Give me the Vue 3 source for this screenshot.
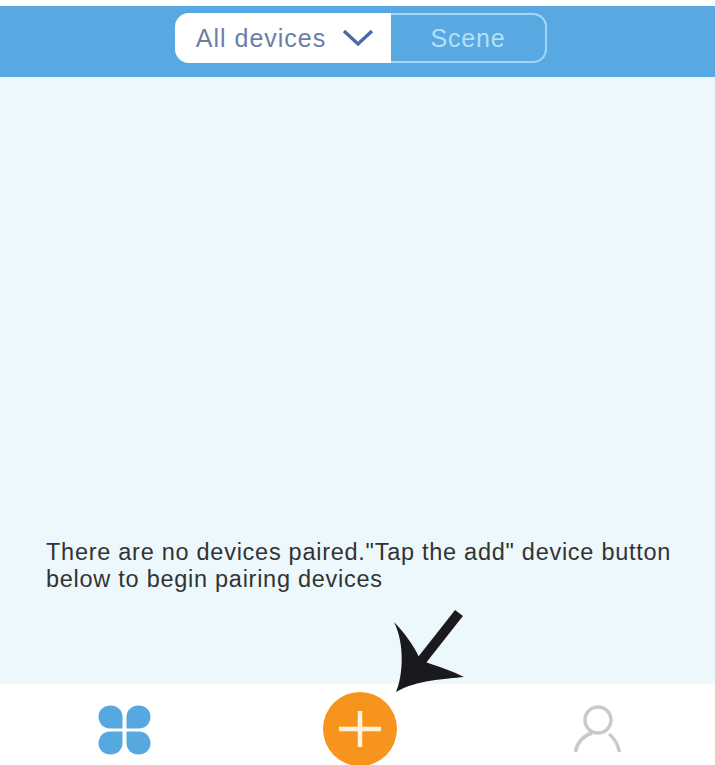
<script setup>
const message = 'There are no devices paired."Tap the add" device button below to begin pairing devices'
</script>

<template>
  <div class="screen">
    <header class="topbar">
      <div class="switcher">
        <div class="tab tab-active">
          <span>All devices</span>
          <svg class="chevron" viewBox="0 0 32 18" width="32" height="18">
            <path d="M2 2 L16 15 L30 2" fill="none" stroke="#4a6aa8" stroke-width="3.4" />
          </svg>
        </div>
        <div class="tab tab-scene">Scene</div>
      </div>
    </header>

    <main class="content">
      <p class="message">{{ message }}</p>
    </main>

    <footer class="tabbar">
      <svg class="clover" viewBox="0 0 53 50" width="53" height="50">
        <g fill="#56a9e0">
          <path d="M24.500 23.500 L12 23.500 C5 23.500 .5 18 .5 11.500 C.5 5 6 .5 12.500 .5 C19 .5 24.500 5 24.500 12 Z" />
          <path d="M28.500 23.500 L41 23.500 C48 23.500 52.500 18 52.500 11.500 C52.500 5 47 .5 40.500 .5 C34 .5 28.500 5 28.500 12 Z" />
          <path d="M24.500 26.500 L12 26.500 C5 26.500 .5 32 .5 38.500 C.5 45 6 49.500 12.500 49.500 C19 49.500 24.500 45 24.500 38 Z" />
          <path d="M28.500 26.500 L41 26.500 C48 26.500 52.500 32 52.500 38.500 C52.500 45 47 49.500 40.500 49.500 C34 49.500 28.500 45 28.500 38 Z" />
        </g>
      </svg>
      <button class="add">
        <svg viewBox="0 0 42 36" width="42" height="36">
          <path d="M21 0 V36 M0 18 H42" stroke="#fdf3dc" stroke-width="4.5" fill="none" />
        </svg>
      </button>
      <svg class="person" viewBox="0 0 48 48" width="48" height="48">
        <circle cx="24" cy="15" r="13" fill="none" stroke="#c9cbcb" stroke-width="3.5" />
        <path d="M18 28 C9 31 3 38 1.500 47 M35 29 C40 33 44 40 45.500 47" fill="none" stroke="#c9cbcb" stroke-width="3.500" />
      </svg>
    </footer>

    <!-- arrow pointing at the add button -->
    <svg class="arrow" viewBox="0 0 80 90" width="80" height="90">
      <path d="M69 5 L32 52" stroke="#1a1a1e" stroke-width="10" fill="none" />
      <path d="M4 14 C14 24 24 38 29 49 L38 55 C50 59 62 63 74 69 C56 71 26 72 6 84 C13 68 15 36 4 14 Z" fill="#1a1a1e" />
    </svg>
  </div>
</template>

<style scoped>
.screen {
  position: relative;
  width: 715px;
  height: 765px;
  display: flex;
  flex-direction: column;
  background: #fff;
  padding-top: 6px;
  box-sizing: border-box;
  overflow: hidden;
  font-family: "Liberation Sans", Arial, sans-serif;
}

.topbar {
  height: 71px;
  flex: none;
  background: #58a9e1;
  display: flex;
  justify-content: flex-start;
  align-items: flex-start;
  padding: 7px 0 0 175px;
  box-sizing: border-box;
}

.switcher {
  width: 372px;
  height: 50px;
  display: flex;
}

.tab {
  display: flex;
  align-items: center;
  justify-content: center;
  font-size: 25px;
  box-sizing: border-box;
}

.tab-active {
  width: 216px;
  background: #fff;
  color: #6a7fa8;
  gap: 16px;
  padding-left: 4px;
  letter-spacing: 1px;
  border-radius: 14px 0 0 14px;
}

.tab-scene {
  flex: 1;
  color: #b2e0fa;
  letter-spacing: .8px;
  border: 2px solid #a6d6f5;
  border-left: none;
  border-radius: 0 14px 14px 0;
}

.content {
  flex: 1;
  background: #ecf8fc;
  display: flex;
  flex-direction: column;
  justify-content: flex-end;
  padding: 0 40px 91px 46px;
}

.message {
  margin: 0;
  color: #333;
  font-size: 23.5px;
  letter-spacing: .73px;
  line-height: 27px;
}

.tabbar {
  height: 81px;
  flex: none;
  display: flex;
  justify-content: space-between;
  align-items: center;
  padding: 8px 93px 0 98px;
  box-sizing: border-box;
}

.clover {
  margin-top: 3px;
}

.add {
  width: 74px;
  height: 74px;
  margin-right: 5px;
  border: none;
  border-radius: 50%;
  padding: 0;
  background: #f7941d;
  display: flex;
  align-items: center;
  justify-content: center;
}

.arrow {
  position: absolute;
  left: 390px;
  top: 608px;
}
</style>
